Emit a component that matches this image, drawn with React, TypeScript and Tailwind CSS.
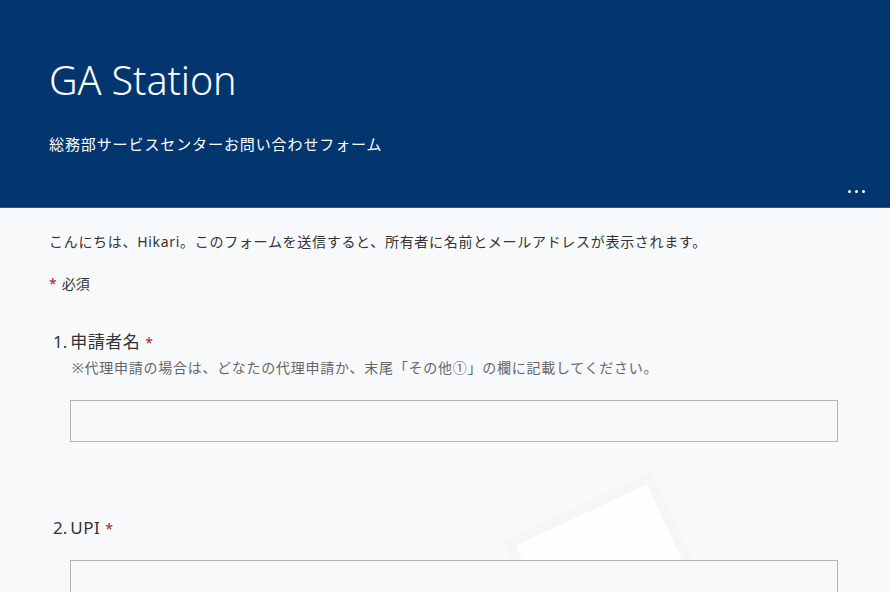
import React from "react";

const font = { fontFamily: '"Noto Sans", "Noto Sans CJK JP", sans-serif' };

function Question({ num, title, desc }: { num: number; title: string; desc?: string }) {
  return (
    <div className="pl-[4px]">
      <div className="flex items-baseline text-[17px] leading-[22px] tracking-[0.5px] text-[#333]">
        <span className="mr-[3px] tracking-normal">{num}.</span>
        <span>{title}</span>
        <span className="ml-[5px] text-[14px] text-[#a4262c]">*</span>
      </div>
      {desc && (
        <div className="mt-[5px] pl-[19px] text-[14px] leading-[18px] tracking-[0.75px] text-[#666]">{desc}</div>
      )}
      <div
        className={
          desc
            ? "ml-[17px] mt-[23px] h-[42px] w-[768px] border border-[#b3b3b3] bg-[#f8f9fb]"
            : "ml-[17px] mt-[20px] h-[42px] w-[768px] border border-[#b3b3b3] bg-[#f8f9fb]"
        }
      />
    </div>
  );
}

export default function App() {
  return (
    <div className="relative h-[592px] w-[890px] overflow-hidden bg-[#f8f9fb]" style={font}>
      {/* header */}
      <div className="relative h-[208px] border-b border-[#2c5486] bg-[#03366e] px-[49px] pt-[56px] text-white">
        <h1 className="text-[39.5px] font-light leading-[48px] tracking-[-0.1px]">GA Station</h1>
        <p className="mt-[30px] text-[15px] leading-[20px] tracking-[0.9px]">総務部サービスセンターお問い合わせフォーム</p>
        <div className="absolute bottom-[14px] right-[25px] flex gap-[4px]">
          <span className="h-[3px] w-[3px] rounded-full bg-white" />
          <span className="h-[3px] w-[3px] rounded-full bg-white" />
          <span className="h-[3px] w-[3px] rounded-full bg-white" />
        </div>
      </div>

      {/* faint illustration */}
      <div className="pointer-events-none absolute left-[522px] top-[500px] h-[130px] w-[165px] -rotate-[25deg] border-[10px] border-[#f5f6f8] bg-white/90" />

      <div className="relative px-[49px] pt-[24px]">
        <p className="text-[14px] leading-[20px] tracking-[0.7px] text-[#333]">
          こんにちは、Hikari。このフォームを送信すると、所有者に名前とメールアドレスが表示されます。
        </p>
        <p className="mt-[22px] text-[14px] leading-[20px] text-[#333]">
          <span className="mr-[5px] text-[#a4262c]">*</span>必須
        </p>
        <div className="mt-[37px]">
          <Question
            num={1}
            title="申請者名"
            desc="※代理申請の場合は、どなたの代理申請か、末尾「その他①」の欄に記載してください。"
          />
        </div>
        <div className="mt-[75px]">
          <Question num={2} title="UPI" />
        </div>
      </div>
    </div>
  );
}
